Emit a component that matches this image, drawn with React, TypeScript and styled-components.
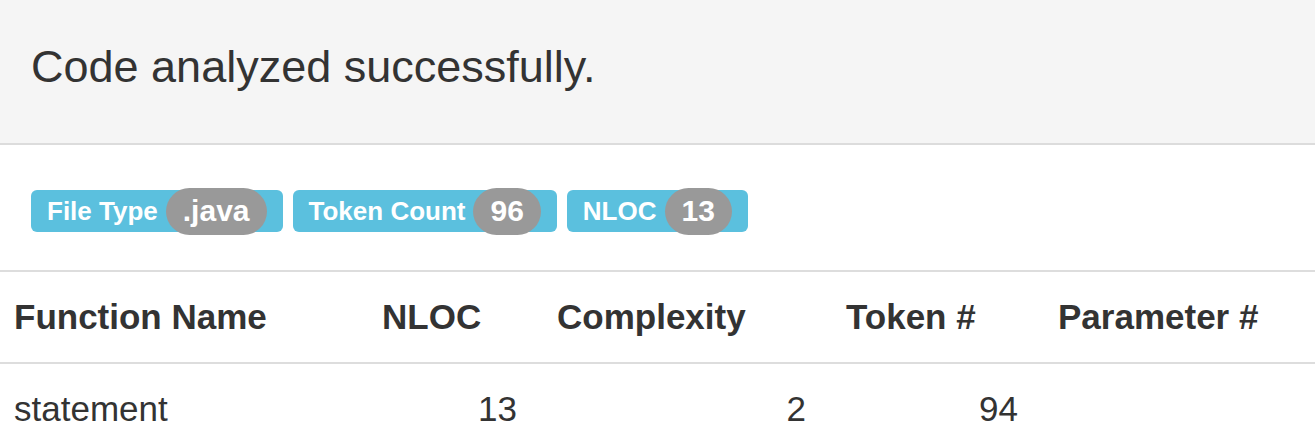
import React from 'react';
import styled, { createGlobalStyle } from 'styled-components';

const GlobalStyle = createGlobalStyle`
  html, body {
    margin: 0;
    padding: 0;
    background: #fff;
  }
  body {
    font-family: "Liberation Sans", Arial, Helvetica, sans-serif;
    color: #333;
    overflow: hidden;
  }
`;

const Page = styled.div`
  width: 1315px;
`;

const Well = styled.div`
  background-color: #f5f5f5;
  border-bottom: 2px solid #dcdcdc;
  padding: 35px 31px 44px;
  font-size: 45px;
  line-height: 64px;
`;

const LabelRow = styled.div`
  display: flex;
  align-items: center;
  gap: 10px;
  padding: 45px 31px 38px;
`;

const Label = styled.span`
  display: inline-flex;
  align-items: center;
  height: 42px;
  padding: 0 16px 0 16px;
  background-color: #5bc0de;
  border-radius: 6px;
  color: #fff;
  font-size: 26px;
  font-weight: 700;
  white-space: nowrap;
`;

const Badge = styled.span`
  display: inline-flex;
  align-items: center;
  justify-content: center;
  height: 47px;
  margin-left: 8px;
  padding: 0 17px;
  background-color: #999;
  border-radius: 24px;
  color: #fff;
  font-size: 30px;
  font-weight: 700;
`;

const Table = styled.table`
  width: 1315px;
  border-collapse: collapse;
  table-layout: fixed;
  border-top: 2px solid #ddd;
  font-size: 35px;
  line-height: 50px;
`;

const HeadCell = styled.th<{ $first?: boolean }>`
  text-align: left;
  font-weight: 700;
  padding: 20px 20px 20px ${(p) => (p.$first ? '14px' : '20px')};
  border-bottom: 2px solid #ddd;
  white-space: nowrap;
`;

const Cell = styled.td<{ $numeric?: boolean; $first?: boolean }>`
  text-align: ${(p) => (p.$numeric ? 'right' : 'left')};
  padding: 20px 20px 20px ${(p) => (p.$first ? '14px' : '20px')};
  white-space: nowrap;
`;

const columns = [
  { title: 'Function Name', width: 362 },
  { title: 'NLOC', width: 175 },
  { title: 'Complexity', width: 289 },
  { title: 'Token #', width: 212 },
  { title: 'Parameter #', width: 277 },
];

const stats = [
  { name: 'File Type', value: '.java' },
  { name: 'Token Count', value: '96' },
  { name: 'NLOC', value: '13' },
];

const rows = [{ name: 'statement', nloc: 13, complexity: 2, tokens: 94, params: '' }];

const App: React.FC = () => (
  <Page>
    <GlobalStyle />
    <Well>Code analyzed successfully.</Well>
    <LabelRow>
      {stats.map((s) => (
        <Label key={s.name}>
          {s.name}
          <Badge>{s.value}</Badge>
        </Label>
      ))}
    </LabelRow>
    <Table>
      <colgroup>
        {columns.map((c) => (
          <col key={c.title} style={{ width: c.width }} />
        ))}
      </colgroup>
      <thead>
        <tr>
          {columns.map((c, i) => (
            <HeadCell key={c.title} $first={i === 0}>
              {c.title}
            </HeadCell>
          ))}
        </tr>
      </thead>
      <tbody>
        {rows.map((r) => (
          <tr key={r.name}>
            <Cell $first>{r.name}</Cell>
            <Cell $numeric>{r.nloc}</Cell>
            <Cell $numeric>{r.complexity}</Cell>
            <Cell $numeric>{r.tokens}</Cell>
            <Cell $numeric>{r.params}</Cell>
          </tr>
        ))}
      </tbody>
    </Table>
  </Page>
);

export default App;
